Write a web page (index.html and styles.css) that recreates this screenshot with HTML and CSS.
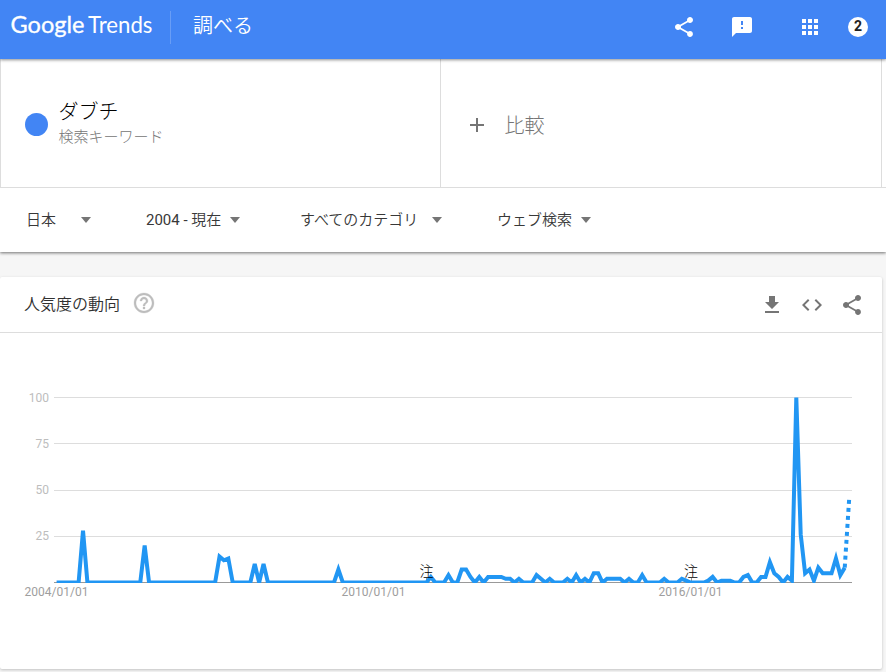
FILE: index.html
```html
<!DOCTYPE html>
<html lang="ja">
<head>
<meta charset="utf-8">
<title>Google Trends</title>
<link rel="stylesheet" href="styles.css">
</head>
<body>
<header class="topbar">
  <svg class="logo" width="144" height="40" viewBox="0 0 144 40" role="img" aria-label="Google Trends">
    <text class="logo-google" x="-0.5" y="26" textLength="74" lengthAdjust="spacingAndGlyphs">Google</text>
    <text class="logo-trends" x="77" y="26" textLength="64.500" lengthAdjust="spacingAndGlyphs">Trends</text>
  </svg>
  <span class="topbar-divider"></span>
  <h1 class="page-title">調べる</h1>
  <nav class="actions">
    <svg class="icon share" viewBox="0 0 24 24"><use href="#share-shape"/></svg>
    <svg class="icon feedback" viewBox="0 0 24 24"><path d="M20 2H4c-1.100 0-1.990.9-1.990 2L2 22l4-4h14c1.100 0 2-.9 2-2V4c0-1.100-.9-2-2-2zm-7 12h-2v-2h2v2zm0-4h-2V6h2v4z"/></svg>
    <svg class="icon apps" viewBox="0 0 24 24"><path d="M4 8h4V4H4v4zm6 12h4v-4h-4v4zm-6 0h4v-4H4v4zm0-6h4v-4H4v4zm6 0h4v-4h-4v4zm6-10v4h4V4h-4zm-6 4h4V4h-4v4zm6 6h4v-4h-4v4zm0 6h4v-4h-4v4z"/></svg>
    <span class="count">2</span>
  </nav>
</header>

<section class="explore">
  <div class="terms">
    <div class="term">
      <span class="dot"></span>
      <div class="term-text">
        <div class="term-name">ダブチ</div>
        <div class="term-type">検索キーワード</div>
      </div>
    </div>
    <div class="compare">
      <svg class="icon" viewBox="0 0 24 24"><path d="M19 13h-6v6h-2v-6H5v-2h6V5h2v6h6v2z"/></svg>
      <span>比較</span>
    </div>
  </div>
  <div class="filters">
    <div class="filter region"><span>日本</span><i class="caret"></i></div>
    <div class="filter period"><span><span class="latin">2004 - </span>現在</span><i class="caret"></i></div>
    <div class="filter category"><span>すべてのカテゴリ</span><i class="caret"></i></div>
    <div class="filter source"><span>ウェブ検索</span><i class="caret"></i></div>
  </div>
</section>

<main class="card">
  <div class="card-head">
    <h2>人気度の動向</h2>
    <svg class="icon help" viewBox="0 0 24 24"><path d="M11 18h2v-2h-2v2zm1-16C6.480 2 2 6.480 2 12s4.480 10 10 10 10-4.480 10-10S17.520 2 12 2zm0 18c-4.410 0-8-3.590-8-8s3.590-8 8-8 8 3.590 8 8-3.590 8-8 8zm0-14c-2.210 0-4 1.790-4 4h2c0-1.100.9-2 2-2s2 .9 2 2c0 2-3 1.750-3 5h2c0-2.250 3-2.500 3-5 0-2.210-1.790-4-4-4z"/></svg>
    <div class="tools">
      <svg class="icon" viewBox="0 0 24 24"><path d="M19 9h-4V3H9v6H5l7 7 7-7zM5 18v2h14v-2H5z"/></svg>
      <svg class="icon" viewBox="0 0 24 24"><path d="M9.400 16.600L4.800 12l4.600-4.600L8 6l-6 6 6 6 1.400-1.400zm5.200 0l4.600-4.600-4.600-4.600L16 6l6 6-6 6-1.400-1.400z"/></svg>
      <svg class="icon" viewBox="0 0 24 24"><path id="share-shape" d="M18 16.080c-.76 0-1.440.3-1.960.77L8.910 12.700c.05-.23.09-.46.09-.7s-.04-.47-.09-.7l7.050-4.110c.54.5 1.250.81 2.040.81 1.660 0 3-1.340 3-3s-1.340-3-3-3-3 1.340-3 3c0 .24.040.47.090.7L8.040 9.810C7.500 9.310 6.790 9 6 9c-1.660 0-3 1.340-3 3s1.340 3 3 3c.79 0 1.500-.31 2.040-.81l7.120 4.160c-.05.21-.08.43-.08.65 0 1.610 1.310 2.920 2.920 2.920s2.920-1.310 2.920-2.920-1.310-2.920-2.920-2.920z"/></svg>
    </div>
  </div>
  <svg class="chart" width="882" height="336" viewBox="0 333 882 336">
    <defs><clipPath id="plot"><rect x="54" y="397" width="800" height="186"/></clipPath></defs>
    <path class="grid" d="M54 397.500H852M54 443.500H852M54 490.500H852M54 536.500H852"/>
    <path class="axis" d="M54 582.500H852"/>
    <path class="axis" d="M426.500 578V582M691.500 578V582"/>
    <g clip-path="url(#plot)">
      <path id="trend" class="line"/>
      <path id="partial" class="line dotted"/>
    </g>
    <g class="y-labels">
      <text x="49" y="402">100</text>
      <text x="49" y="448">75</text>
      <text x="49" y="494">50</text>
      <text x="49" y="540">25</text>
    </g>
    <g class="x-labels">
      <text x="56.500" y="596">2004/01/01</text>
      <text x="373.500" y="596">2010/01/01</text>
      <text x="690.500" y="596">2016/01/01</text>
    </g>
    <g class="notes">
      <text x="426.500" y="576">注</text>
      <text x="691" y="576">注</text>
    </g>
  </svg>
</main>
<script src="chart.js"></script>
</body>
</html>
```
FILE: styles.css
```css
* { box-sizing: border-box; }

body {
  margin: 0;
  height: 672px;
  overflow: hidden;
  background: #f6f6f6;
  color: #212121;
  font-family: Roboto, "Noto Sans CJK JP", sans-serif;
  font-weight: 300;
}

h1, h2 { margin: 0; font-weight: 350; }

.icon { display: block; width: 24px; height: 24px; fill: #757575; flex: none; }

.topbar {
  position: relative;
  display: flex;
  align-items: center;
  height: 59px;
  padding: 0 18px 5px 11px;
  background: #4285f4;
  color: #fff;
  box-shadow: 0 1px 3px rgba(0, 0, 0, .45);
}

.topbar .icon { fill: #fff; }

.logo { display: block; fill: #fff; font-family: Lato, sans-serif; overflow: visible; }
.logo-google { font-size: 24px; font-weight: 400; stroke: #fff; stroke-width: .35; }
.logo-trends { font-size: 22.500px; font-weight: 400; }
.topbar-divider { width: 1px; height: 33px; margin: 0 22px 0 15px; background: #689df6; }
.page-title { font-size: 20px; line-height: 30px; margin-top: -3px; }

.actions { display: flex; align-items: center; margin-left: auto; }
.feedback { margin-left: 34px; }
.apps { margin-left: 44px; }
.count {
  width: 20px;
  height: 20px;
  margin-left: 26px;
  border-radius: 50%;
  background: #fff;
  color: #212121;
  font-size: 14px;
  font-weight: 700;
  line-height: 19px;
  text-align: center;
}

.explore { background: #fff; box-shadow: 0 1px 3px rgba(0, 0, 0, .55); }

.terms { display: flex; height: 129px; border-bottom: 1px solid #ddd; }
.term { display: flex; align-items: center; width: 441px; padding: 3px 0 0 24px; border: solid #ddd; border-width: 0 1px; }
.dot { width: 23px; height: 23px; border-radius: 50%; background: #4285f4; }
.term-text { margin: -2px 0 0 10.500px; }
.term-name { font-size: 20px; line-height: 28px; color: #000; }
.term-type { font-size: 15px; line-height: 23px; color: #757575; }
.compare {
  display: flex;
  align-items: center;
  width: 441px;
  padding: 4px 0 0 24px;
  border-right: 1px solid #ddd;
  color: #757575;
  font-size: 20px;
}
.compare span { margin: -2px 0 0 15.500px; }

.filters { display: flex; height: 64px; padding-left: 26px; color: #383838; font-size: 15px; font-weight: 350; }
.filter { display: flex; align-items: center; justify-content: space-between; height: 63px; }
.filter > span { margin-top: -2px; }
.latin { font-weight: 400; white-space: pre; }
.region { width: 65px; }
.period { width: 94px; margin-left: 55px; }
.category { width: 142px; margin-left: 60px; }
.source { width: 94px; margin-left: 55px; }
.caret { margin-right: .5px; border: 5.500px solid transparent; border-top: 6px solid #757575; border-bottom: 0; }

.card {
  width: 882px;
  height: 392px;
  margin-top: 25px;
  background: #fff;
  border-radius: 2px;
  box-shadow: 0 1px 3px rgba(0, 0, 0, .22);
}
.card-head { display: flex; align-items: center; height: 56px; padding: 0 18px 0 24px; border-bottom: 1px solid #ddd; }
.card-head h2 { color: #303030; font-size: 16px; line-height: 24px; }
.card-head .help { margin: -3px 0 0 12px; fill: #bdbdbd; stroke: #bdbdbd; stroke-width: .3; }
.tools { display: flex; gap: 16px; margin-left: auto; }

.chart { display: block; font-family: Roboto, "Noto Sans CJK JP", sans-serif; font-size: 12px; font-weight: 400; }
.grid { stroke: #ddd; }
.axis { stroke: #999; }
.line { fill: none; stroke: #2196f3; stroke-width: 4; }
.dotted { stroke-dasharray: 4 4; }
.y-labels { fill: #bdbdbd; text-anchor: end; }
.x-labels { fill: #9e9e9e; text-anchor: middle; }
.notes { fill: #000; font-size: 14px; font-weight: 300; text-anchor: middle; }
```
FILE: chart.js
```js
// Non-zero monthly values, keyed by months since January 2004.
const values = {
  6: 28, 20: 20, 37: 14, 38: 12, 39: 13, 45: 10, 47: 10, 64: 7, 85: 3, 89: 4,
  92: 7, 93: 7, 94: 3, 96: 3, 98: 3, 99: 3, 100: 3, 101: 3, 102: 2, 103: 2,
  105: 2, 109: 4, 110: 2, 112: 2, 116: 2, 118: 4, 120: 2, 122: 5, 123: 5,
  125: 2, 126: 2, 127: 2, 128: 2, 130: 2, 133: 4, 138: 2, 142: 2, 143: 1,
  148: 1, 149: 3, 151: 1, 152: 1, 153: 1, 156: 3, 157: 4, 160: 3, 161: 3,
  162: 11, 163: 5, 164: 3, 166: 3, 167: 1, 168: 100, 169: 26, 170: 5, 171: 7,
  172: 1, 173: 8, 174: 5, 175: 5, 176: 5, 177: 13, 178: 4, 179: 8, 180: 45
};
const point = m => `${(56.6 + m * 4.403).toFixed(2)} ${(582.5 - (values[m] || 0) * 1.85).toFixed(2)}`;
const trace = (from, to) => {
  const points = [];
  for (let m = from; m <= to; m++) points.push(point(m));
  return 'M' + points.join('L');
};
document.getElementById('trend').setAttribute('d', trace(0, 179));
document.getElementById('partial').setAttribute('d', trace(179, 180));
```
